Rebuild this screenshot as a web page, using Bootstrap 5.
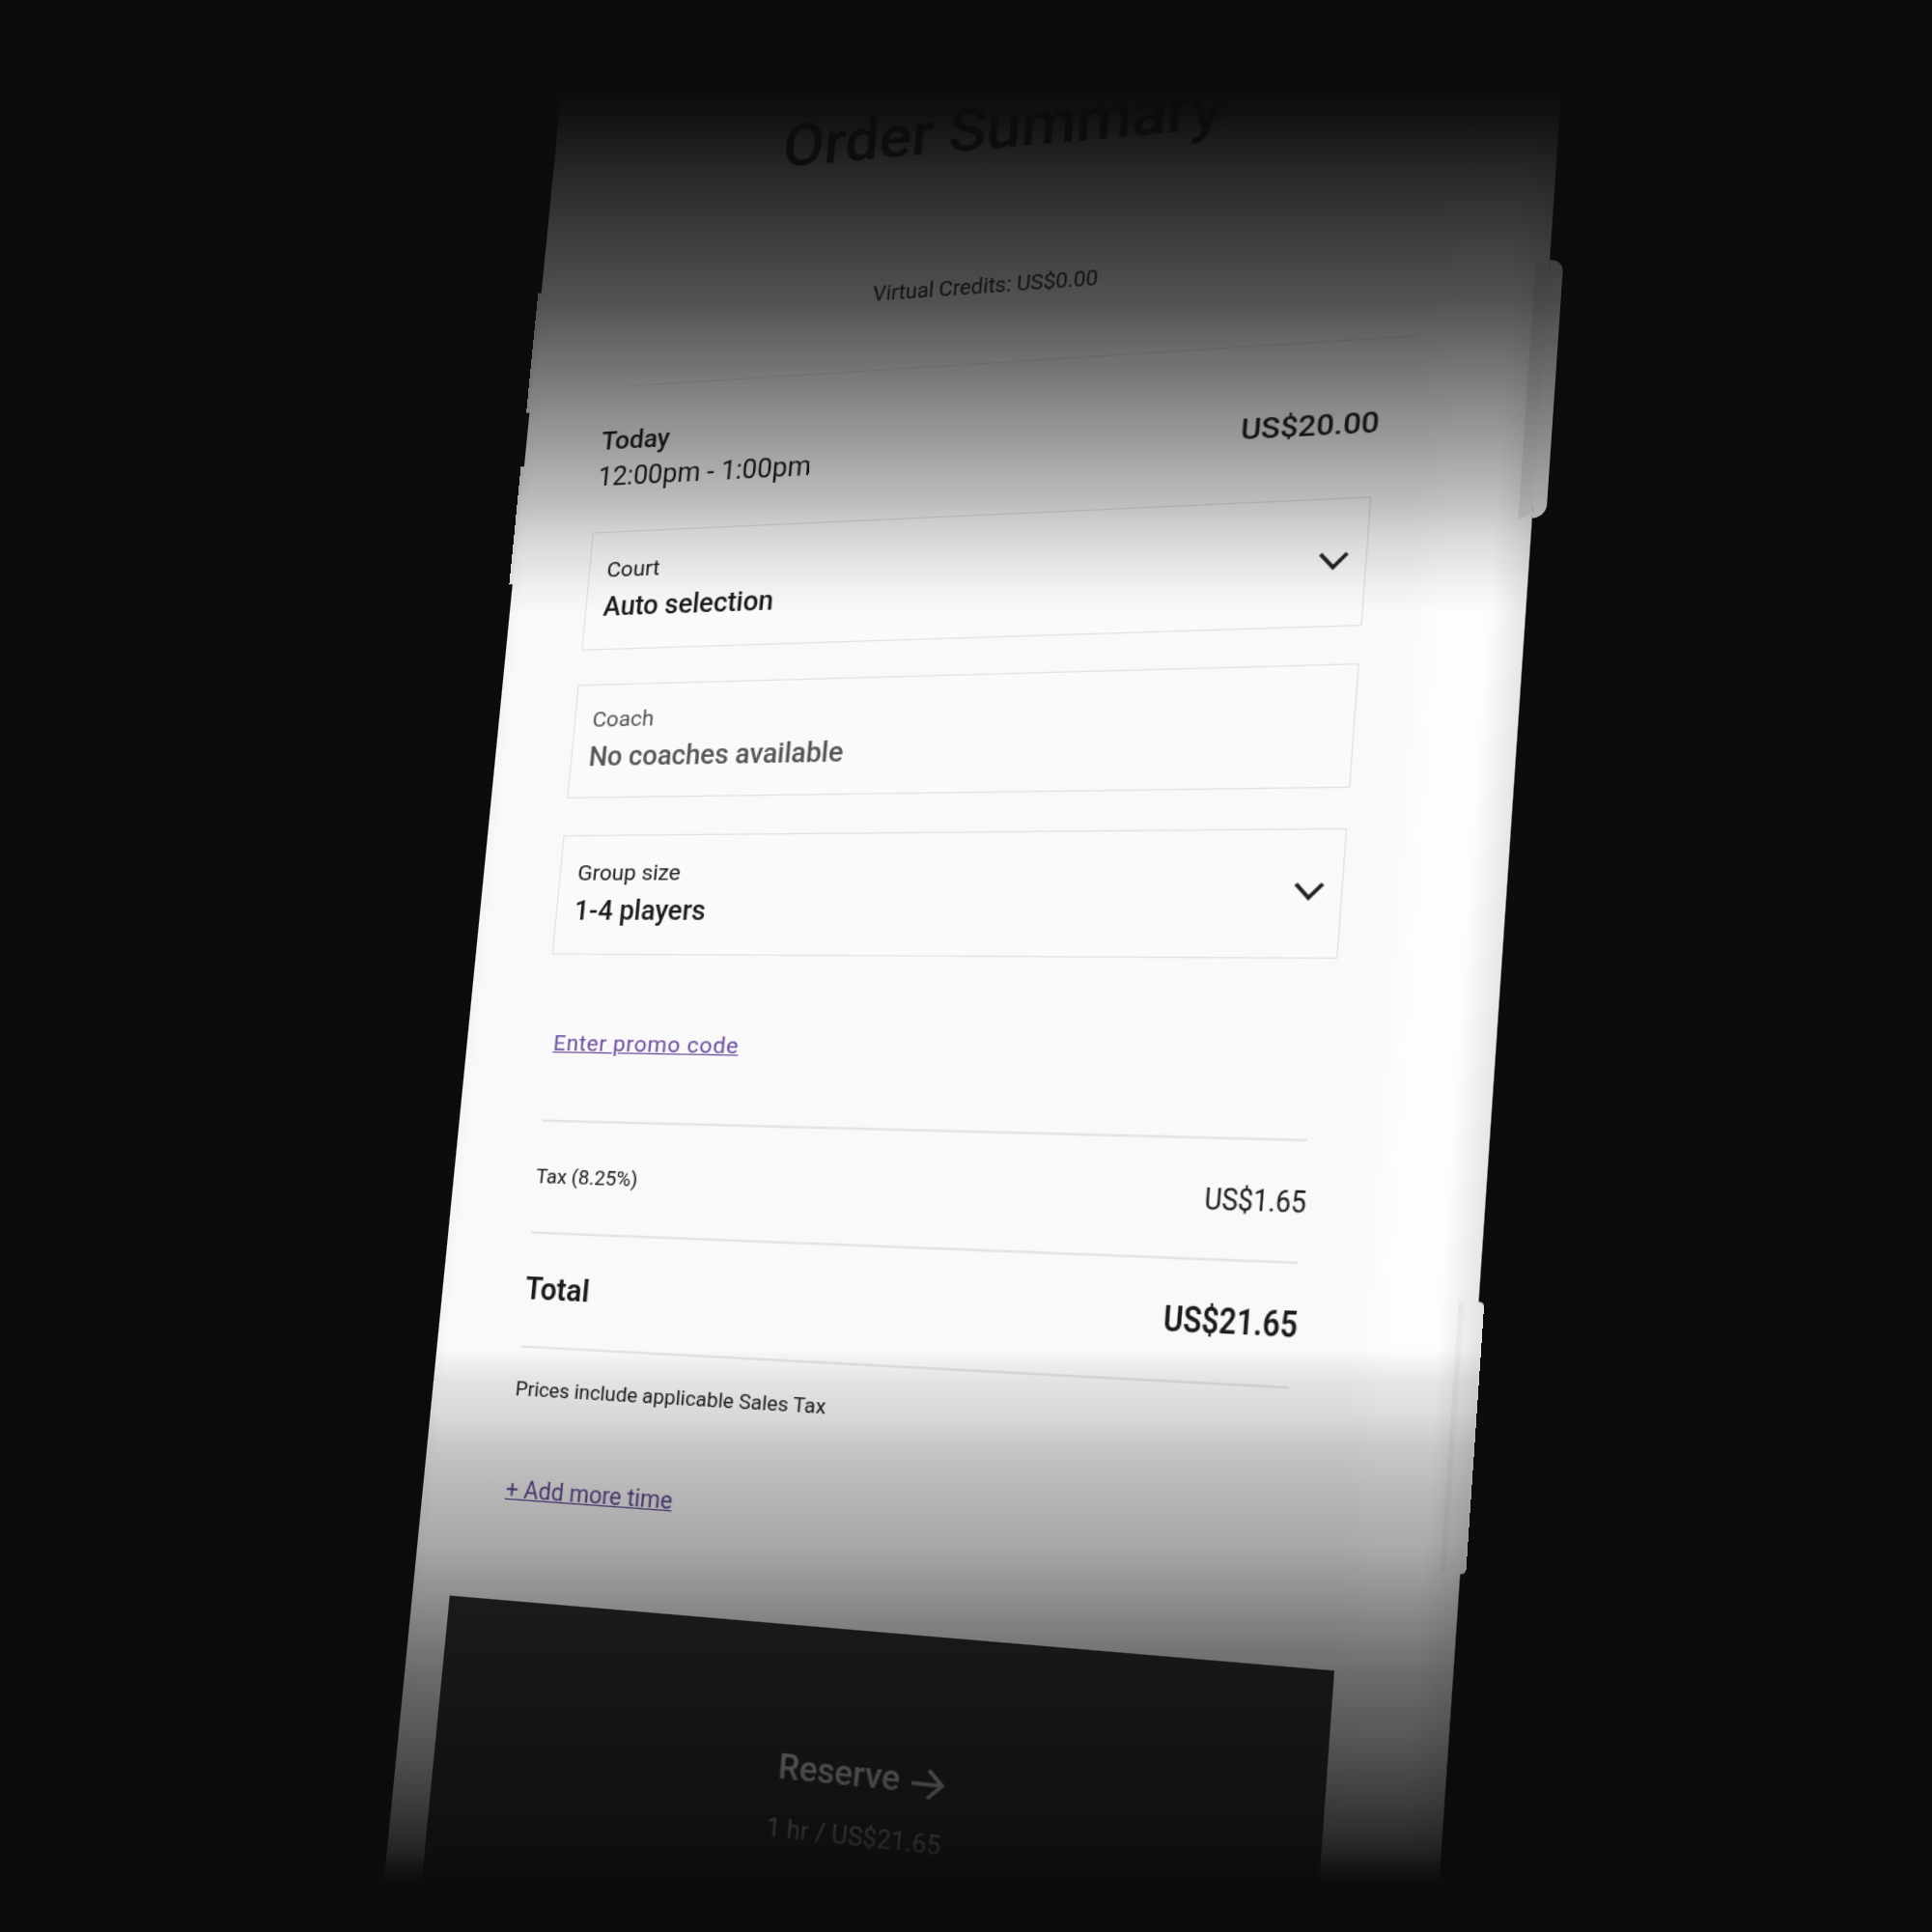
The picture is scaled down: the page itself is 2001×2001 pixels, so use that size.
<!DOCTYPE html>
<html lang="en">
<head>
  <meta charset="UTF-8">
  <title>Order Summary</title>
  <link href="https://cdn.jsdelivr.net/npm/bootstrap@5.3.0/dist/css/bootstrap.min.css" rel="stylesheet">
  <style>
    body { background: #0c0c0c; margin: 0; font-family: Roboto, "Liberation Sans", sans-serif; color: #1b1b1b; }
    .stage { width: 2001px; height: 2001px; overflow: hidden; position: relative; background: #0c0c0c; }
    .shade {
      position: absolute; inset: 0; pointer-events: none;
      background: linear-gradient(180deg,
        rgba(12,12,12,1) 95px, rgba(12,12,12,.98) 118px, rgba(12,12,12,.89) 176px, rgba(12,12,12,.81) 233px,
        rgba(12,12,12,.71) 310px, rgba(12,12,12,.55) 386px, rgba(12,12,12,.38) 463px, rgba(12,12,12,.25) 520px,
        rgba(12,12,12,.14) 558px, rgba(12,12,12,.04) 608px, rgba(12,12,12,0) 635px,
        rgba(12,12,12,0) 1397px, rgba(12,12,12,.09) 1430px, rgba(12,12,12,.13) 1463px, rgba(12,12,12,.21) 1497px,
        rgba(12,12,12,.26) 1530px, rgba(12,12,12,.3) 1563px, rgba(12,12,12,.34) 1600px, rgba(12,12,12,.475) 1667px,
        rgba(12,12,12,.6) 1733px, rgba(12,12,12,.69) 1800px, rgba(12,12,12,.8) 1867px, rgba(12,12,12,.9) 1917px,
        rgba(12,12,12,.97) 1935px, rgba(12,12,12,1) 1950px);
    }
    .phone {
      width: 822px; height: 1760px; position: relative; transform-origin: 0 0;
      background: linear-gradient(90deg, #f4f4f4 0, #f9f9f9 10px, #f9f9f9 735px, #fdfdfd 760px, #fdfdfd 795px, #e6e6e6 822px);
    }
    .nub { position: absolute; background: #ececec; }
    .nub-l { left: -3px; width: 3px; }
    .nub-r { left: 822px; width: 10px; border-radius: 0 10px 10px 0; background: #e0e0e0; box-shadow: -10px 0 0 0 #dcdcdc; }
    .nub-low { width: 4px; border-radius: 0 4px 4px 0; background: #e4e4e4; box-shadow: -14px 0 0 0 #e8e8e8; }
    .sheet { width: 703px; padding: 47px 0 0 68px; box-sizing: content-box; }
    .sheet-inner { width: 635px; }
    .title-txt { font-size: 51.5px; line-height: 60px; font-weight: 500; margin: 0 0 96px; text-align: center; }
    .credits { font-size: 17.5px; line-height: 20px; margin-bottom: 56px; text-align: center; }
    .rule-top { margin: 0 -25px 33px 20px; border-color: #e6e6e6; opacity: 1; }
    .when-day { font-size: 22.5px; line-height: 29px; font-weight: 500; }
    .when-time { font-size: 23px; line-height: 29px; margin-top: 3px; }
    .when-price { font-size: 24px; font-weight: 500; margin: 9px -2px 0 0; }
    .pick { height: 104px; margin-top: 30px; padding: 0 12px 3px 15px; background: #fafafa; border: 1.5px solid #e2e2e2; }
    .pick-first { margin-top: 34px; }
    .pick-off { height: 99px; }
    .pick-last { margin-top: 32px; height: 103px; }
    .pick-label { font-size: 19px; line-height: 24px; margin-bottom: 8px; }
    .pick-value { font-size: 23px; line-height: 26px; font-weight: 500; }
    .pick-off { color: #555; }
    .promo { font-size: 19px; line-height: 24px; margin: 64px 0 53px 9px; color: #6b4a9e; letter-spacing: .6px; display: block; }
    .line-box { width: 616px; margin: 0 0 0 6px; border-top: 2px solid #e4e4e4; opacity: 1; }
    .sum-row { width: 625px; height: 93px; padding: 0 0 0 5px; }
    .sum-row-total { height: 93.5px; }
    .tax-label { font-size: 17px; }
    .tax-value { font-size: 24px; display: inline-block; transform: scaleX(.84); transform-origin: right center; }
    .total-label { font-size: 25px; font-weight: 600; }
    .total-value { font-size: 28px; font-weight: 600; display: inline-block; transform: scaleX(.81); transform-origin: right center; }
    .note { font-size: 16.9px; line-height: 22px; margin: 23.5px 0 61px 5px; }
    .more { font-size: 19.4px; line-height: 26px; margin-left: 5px; color: #5f4490; display: block; }
    .reserve { width: 705px; height: 400px; margin: 78px 0 0 -35px; padding: 96px 0 0 8px; background: #272727; color: #fff; text-align: center; }
    .reserve-main { font-size: 27px; line-height: 34px; font-weight: 500; }
    .reserve-sub { font-size: 20px; line-height: 26px; margin: 18px 6px 0 0; }
  </style>
</head>
<body>
  <div class="stage">
    <div class="phone" id="phone">
      <span class="nub nub-l" style="top: 190px; height: 108px;"></span>
      <span class="nub nub-l" style="top: 346px; height: 105px;"></span>
      <span class="nub nub-r" style="top: 225px; height: 206px;"></span>
      <span class="nub nub-r nub-low" style="top: 1037px; height: 204px;"></span>

      <div class="sheet">
        <div class="sheet-inner">
          <h1 class="title-txt">Order Summary</h1>
          <div class="credits">Virtual Credits: US$0.00</div>
          <hr class="rule-top">

          <div class="d-flex justify-content-between align-items-center">
            <div>
              <div class="when-day">Today</div>
              <div class="when-time">12:00pm - 1:00pm</div>
            </div>
            <div class="when-price">US$20.00</div>
          </div>

          <div class="pick pick-first d-flex justify-content-between align-items-center">
            <div>
              <div class="pick-label">Court</div>
              <div class="pick-value">Auto selection</div>
            </div>
            <svg width="24" height="16" viewBox="0 0 24 16" fill="none" stroke="#222" stroke-width="3"><path d="M2 2l10 11L22 2"/></svg>
          </div>

          <div class="pick pick-off d-flex align-items-center">
            <div>
              <div class="pick-label">Coach</div>
              <div class="pick-value">No coaches available</div>
            </div>
          </div>

          <div class="pick pick-last d-flex justify-content-between align-items-center">
            <div>
              <div class="pick-label">Group size</div>
              <div class="pick-value">1-4 players</div>
            </div>
            <svg width="24" height="16" viewBox="0 0 24 16" fill="none" stroke="#222" stroke-width="3"><path d="M2 2l10 11L22 2"/></svg>
          </div>

          <a class="promo" href="#">Enter promo code</a>

          <hr class="line-box">
          <div class="sum-row d-flex justify-content-between align-items-center">
            <span class="tax-label">Tax (8.25%)</span>
            <span class="tax-value">US$1.65</span>
          </div>
          <hr class="line-box">
          <div class="sum-row sum-row-total d-flex justify-content-between align-items-center">
            <span class="total-label">Total</span>
            <span class="total-value">US$21.65</span>
          </div>
          <hr class="line-box">

          <div class="note">Prices include applicable Sales Tax</div>
          <a class="more" href="#">+ Add more time</a>

          <div class="reserve">
            <div class="reserve-main">Reserve
              <svg width="30" height="26" viewBox="0 0 30 26" fill="none" stroke="#fff" stroke-width="3"><path d="M2 13h24M15 2l11 11-11 11"/></svg>
            </div>
            <div class="reserve-sub">1 hr / US$21.65</div>
          </div>
        </div>
      </div>
    </div>
    <div class="shade"></div>
  </div>

  <script>
    // perspective of the photographed phone: layout points -> points in the 1568 preview
    const scale = 2001 / 1568;
    const from = [[68, 409], [703, 409], [33, 1320], [738, 1320]];
    const to = [[481, 433], [1113, 404], [365, 1295], [1083, 1356]].map(p => [p[0] * scale, p[1] * scale]);

    function solve(m) {
      const n = m.length;
      for (let i = 0; i < n; i++) {
        let best = i;
        for (let r = i + 1; r < n; r++) if (Math.abs(m[r][i]) > Math.abs(m[best][i])) best = r;
        [m[i], m[best]] = [m[best], m[i]];
        for (let r = 0; r < n; r++) {
          if (r === i) continue;
          const f = m[r][i] / m[i][i];
          for (let c = i; c <= n; c++) m[r][c] -= f * m[i][c];
        }
      }
      return m.map((row, i) => row[n] / row[i]);
    }

    const rows = [];
    from.forEach((p, i) => {
      const [x, y] = p, [u, v] = to[i];
      rows.push([x, y, 1, 0, 0, 0, -u * x, -u * y, u]);
      rows.push([0, 0, 0, x, y, 1, -v * x, -v * y, v]);
    });
    const [a, b, c, d, e, f, g, h] = solve(rows);
    document.getElementById('phone').style.transform =
      `matrix3d(${a},${d},0,${g},${b},${e},0,${h},0,0,1,0,${c},${f},0,1)`;
  </script>
  <script src="https://cdn.jsdelivr.net/npm/bootstrap@5.3.0/dist/js/bootstrap.bundle.min.js"></script>
</body>
</html>
